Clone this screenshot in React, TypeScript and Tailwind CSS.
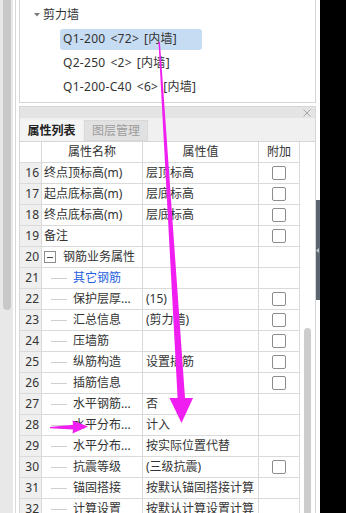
import React from "react";

type Row = {
  n: number;
  name: string;
  value?: string;
  check?: boolean;
  kind?: "plain" | "group" | "child";
  blue?: boolean;
};

const rows: Row[] = [
  { n: 16, name: "终点顶标高(m)", value: "层顶标高", check: true },
  { n: 17, name: "起点底标高(m)", value: "层底标高", check: true },
  { n: 18, name: "终点底标高(m)", value: "层底标高", check: true },
  { n: 19, name: "备注", value: "", check: true },
  { n: 20, name: "钢筋业务属性", kind: "group" },
  { n: 21, name: "其它钢筋", kind: "child", blue: true },
  { n: 22, name: "保护层厚...", value: "(15)", check: true, kind: "child" },
  { n: 23, name: "汇总信息", value: "(剪力墙)", check: true, kind: "child" },
  { n: 24, name: "压墙筋", value: "", check: true, kind: "child" },
  { n: 25, name: "纵筋构造", value: "设置插筋", check: true, kind: "child" },
  { n: 26, name: "插筋信息", value: "", check: true, kind: "child" },
  { n: 27, name: "水平钢筋...", value: "否", kind: "child" },
  { n: 28, name: "水平分布...", value: "计入", kind: "child" },
  { n: 29, name: "水平分布...", value: "按实际位置代替", kind: "child" },
  { n: 30, name: "抗震等级", value: "(三级抗震)", check: true, kind: "child" },
  { n: 31, name: "锚固搭接", value: "按默认锚固搭接计算", kind: "child" },
  { n: 32, name: "计算设置", value: "按默认计算设置计算", kind: "child" },
];

function Checkbox() {
  return <div className="w-[14px] h-[14px] border border-[#8c8c8c] rounded-[2px] bg-white" />;
}

function NameCell({ r }: { r: Row }) {
  if (r.kind === "group") {
    return (
      <div className="flex items-center h-full pl-[2px]">
        <div className="w-[12px] h-[12px] border border-[#8c8c8c] bg-white flex items-center justify-center">
          <div className="w-[6px] h-[1px] bg-[#444]" />
        </div>
        <span className="ml-[7px]">{r.name}</span>
      </div>
    );
  }
  if (r.kind === "child") {
    return (
      <div className="flex items-center h-full pl-[9px]">
        <div className="w-[16px] h-[1px] bg-[#cfcfcf]" />
        <span className={"ml-[6px] " + (r.blue ? "text-[#1f5fe0]" : "")}>{r.name}</span>
      </div>
    );
  }
  return <div className="h-full pl-[2px]">{r.name}</div>;
}

export default function App() {
  return (
    <div className="relative w-[346px] h-[513px] overflow-hidden bg-white font-['Noto_Sans','Noto_Sans_CJK_SC',sans-serif] text-[12px] leading-[20px] text-[#333]">
      <div className="flex h-full">
        {/* left scroll strip */}
        <div className="w-[13px] h-full bg-[#e8e8e8] flex flex-col">
          <div className="ml-[3px] w-[8px] h-[310px] bg-[#c8c8c8] rounded-b-[4px]" />
        </div>
        <div className="w-[2px] h-full bg-white" />
        <div className="w-[1px] h-full bg-[#d8d8d8]" />
        <div className="w-[3px] h-full bg-white" />

        {/* main column */}
        <div className="w-[297px] h-full flex flex-col">
          {/* tree panel */}
          <div className="h-[103px] border-x border-b border-[#d6d6d6] bg-white pt-[3px]">
            <div className="h-[24px] flex items-center">
              <svg width="6" height="4" viewBox="0 0 6 4" className="ml-[14px]">
                <polygon points="0,0 6,0 3,3.6" fill="#7a7a7a" />
              </svg>
              <span className="ml-[3px]">剪力墙</span>
            </div>
            <div className="h-[24px] flex items-center pl-[40px]">
              <div className="w-[142px] h-[21px] rounded-[3px] bg-[#c6dcf2] px-[3px] flex items-center whitespace-nowrap tracking-[0.3px] [word-spacing:1.5px]">
                Q1-200 &lt;72&gt; [内墙]
              </div>
            </div>
            <div className="h-[24px] flex items-center pl-[43px] whitespace-nowrap tracking-[0.3px] [word-spacing:1.5px]">
              Q2-250 &lt;2&gt; [内墙]
            </div>
            <div className="h-[24px] flex items-center pl-[43px] whitespace-nowrap tracking-[0.3px] [word-spacing:1.5px]">
              Q1-200-C40 &lt;6&gt; [内墙]
            </div>
          </div>

          <div className="h-[3px] bg-white" />

          {/* property panel */}
          <div className="flex-1 border-x border-t border-[#d6d6d6] flex flex-col min-h-0">
            <div className="h-[11px] bg-[#e4e4e4] flex items-center justify-end pr-[4px]">
              <svg width="8" height="8" viewBox="0 0 8 8">
                <path d="M0.5 0.5 L7.5 7.5 M7.5 0.5 L0.5 7.5" stroke="#a8a8a8" strokeWidth="1" />
              </svg>
            </div>
            <div className="h-[23px] bg-[#f0f0f0] pt-[2px] flex">
              <div className="w-[63px] h-[21px] bg-[#f4f4f4] flex items-center justify-center font-bold text-[#222]">
                属性列表
              </div>
              <div className="ml-[1px] w-[64px] h-[21px] bg-[#e1e1e1] border border-[#d9d9d9] flex items-center justify-center text-[#9c9c9c]">
                图层管理
              </div>
            </div>
            <div className="flex flex-1 min-h-0 border-t border-[#d6d6d6]">
              <div className="w-[280px] flex flex-col">
                {/* header */}
                <div className="flex h-[21px] border-b border-[#dadada] bg-white">
                  <div className="w-[22px] border-r border-[#dadada]" />
                  <div className="w-[101px] border-r border-[#dadada] text-center">属性名称</div>
                  <div className="w-[116px] border-r border-[#dadada] text-center">属性值</div>
                  <div className="w-[41px] border-r border-[#dadada] text-center">附加</div>
                </div>
                {rows.map((r) => (
                  <div key={r.n} className="flex h-[21px] shrink-0 border-b border-[#dadada] bg-white">
                    <div className="w-[22px] border-r border-[#dadada] bg-[#efefef] text-right pr-[2px]">{r.n}</div>
                    <div className="w-[101px] border-r border-[#dadada] whitespace-nowrap overflow-hidden">
                      <NameCell r={r} />
                    </div>
                    <div className="w-[116px] border-r border-[#dadada] pl-[3px] whitespace-nowrap overflow-hidden">
                      {r.value}
                    </div>
                    <div className="w-[41px] border-r border-[#dadada] flex items-center justify-center">
                      {r.check ? <Checkbox /> : null}
                    </div>
                  </div>
                ))}
              </div>
              <div className="flex-1 bg-white flex flex-col pt-[186px] pl-[4px]">
                <div className="w-[7px] flex-1 bg-[#cdcdcd] rounded-t-[4px]" />
              </div>
            </div>
          </div>
        </div>

        {/* right thin column */}
        <div className="w-[4px] h-full bg-white flex flex-col pt-[200px]">
          <div className="h-[100px] bg-[#5b6570] flex flex-col items-end pt-[48px] pr-[1px]">
            <svg width="3" height="5" viewBox="0 0 3 5">
              <polygon points="3,0 3,5 0,2.5" fill="#c4c8cc" />
            </svg>
          </div>
        </div>
        <div className="w-[26px] h-full bg-black" />
      </div>

      {/* annotation arrows */}
      <svg className="absolute inset-0 pointer-events-none" width="346" height="513" viewBox="0 0 346 513">
        <polygon
          points="158.5,42 159.9,42 185,398 193,398 181.5,423 169.5,398 177.6,398"
          fill="#f01ef0"
        />
        <polygon
          points="50,427 73,424.8 72.5,420.5 88,426.5 72.5,433.5 73,429.6 50,428.2"
          fill="#f01ef0"
        />
      </svg>
    </div>
  );
}
